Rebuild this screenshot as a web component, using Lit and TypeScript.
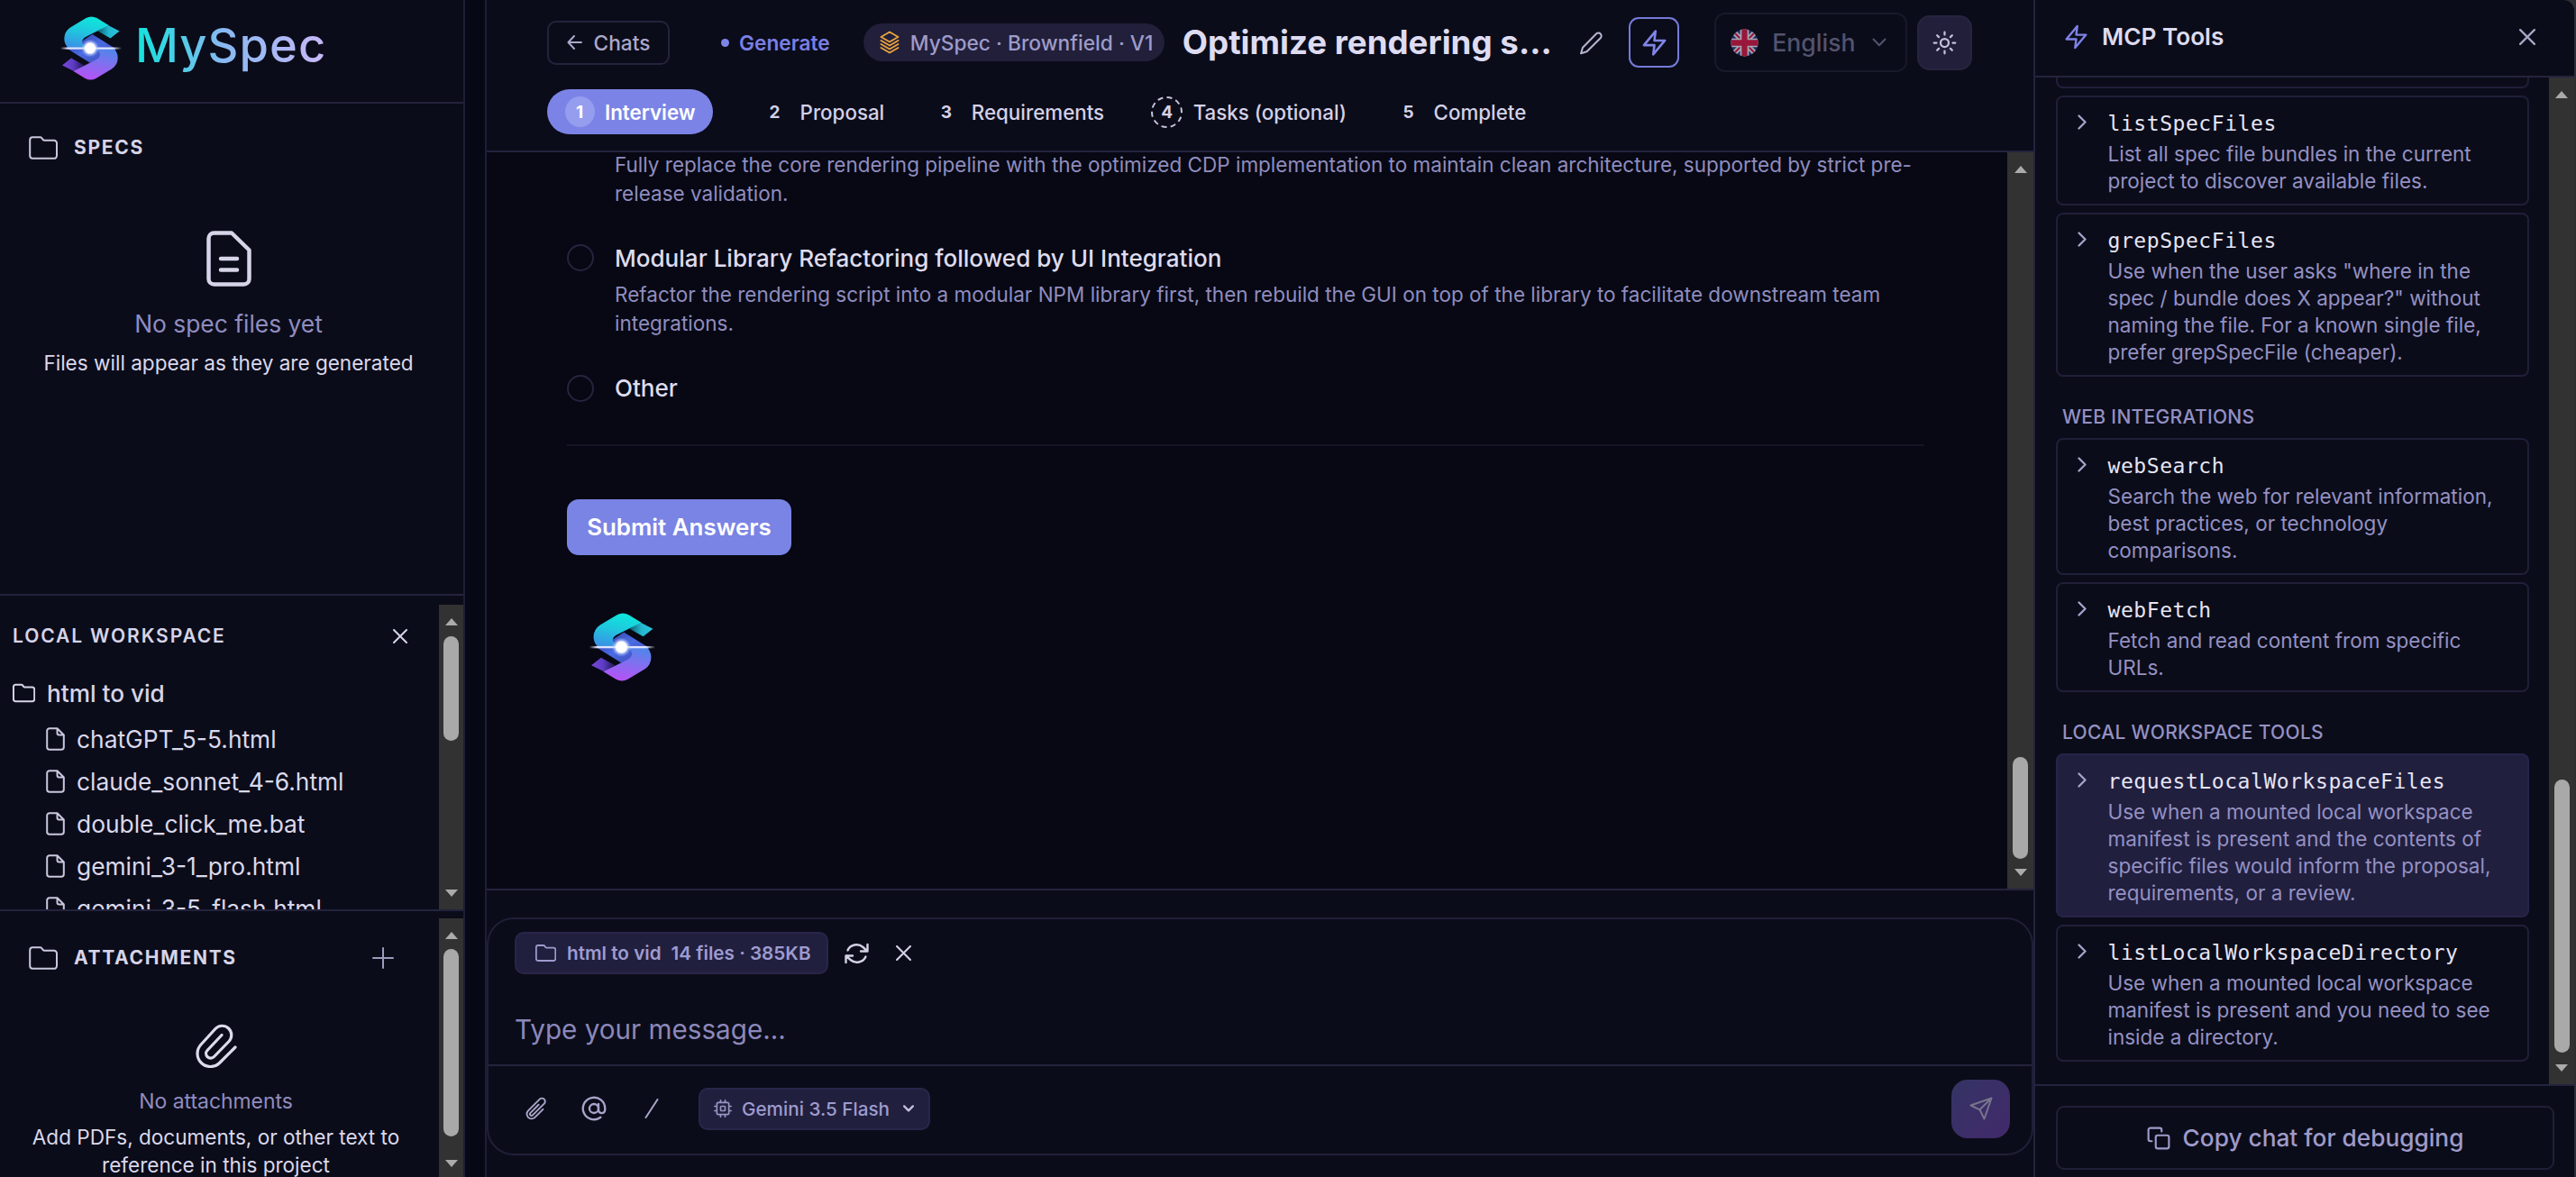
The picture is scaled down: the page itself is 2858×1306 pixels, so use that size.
import { LitElement, html, css } from "lit";
import { customElement } from "lit/decorators.js";

const folder = html`<svg class="ic folder" viewBox="0 0 32 26"><path d="M1.2 4.2a3 3 0 0 1 3-3h8.2q1.3 0 2 1l1.2 1.7q.6.9 1.800.9h10.600a3 3 0 0 1 3 3v14a3 3 0 0 1-3 3H4.200a3 3 0 0 1-3-3z"/></svg>`;
const bolt = html`<svg class="ic bolt" viewBox="0 0 24 24"><path d="M13 2 3 14h9l-1 8 10-12h-9l1-8z"/></svg>`;
const cross = html`<svg class="ic cross" viewBox="0 0 16 16"><path d="M1 1 15 15M15 1 1 15"/></svg>`;
const clip = html`<svg class="ic clip" viewBox="0 0 24 24"><path d="M18.375 12.739l-7.693 7.693a4.500 4.500 0 0 1-6.364-6.364l10.940-10.940A3 3 0 1 1 19.500 7.372L8.552 18.320m.009-.010-.010.010m5.699-9.941-7.810 7.810a1.500 1.500 0 0 0 2.112 2.130"/></svg>`;
const clipBig = html`<svg class="ic clip" viewBox="0 0 46 50"><path d="M44 27 L26.500 44.500 A14.500 14.500 0 0 1 6 24 L22 6.500 A9.800 9.800 0 0 1 37 20.500 L20.500 37.500 A5 5 0 0 1 13 30.500 L29 13.500"/></svg>`;
const chevDown = html`<svg class="ic chev" viewBox="0 0 16 10"><path d="M1.500 1.500 8 8.200 14.500 1.500"/></svg>`;
const file = html`<svg class="ic file" viewBox="0 0 21 26"><path d="M12.500 1.200H4a2.800 2.800 0 0 0-2.800 2.800v18A2.800 2.800 0 0 0 4 24.800h13a2.800 2.800 0 0 0 2.800-2.800V8.500zM12.500 1.200v5.300a2 2 0 0 0 2 2h5.300"/></svg>`;

@customElement("brand-mark")
export class BrandMark extends LitElement {
  static styles = css`
    :host { display: block; }
    svg { display: block; width: 100%; height: 100%; overflow: visible; }
  `;
  render() {
    return html`<svg viewBox="0 0 66 71" preserveAspectRatio="none">
      <defs>
        <linearGradient id="up" x1="0.500" y1="0" x2="0.250" y2="1"><stop offset="0" stop-color="#0ee6dc"/><stop offset=".45" stop-color="#1fc8de"/><stop offset="1" stop-color="#3b8fe6"/></linearGradient>
        <linearGradient id="lo" x1="0.700" y1="0" x2="0.400" y2="1"><stop offset="0" stop-color="#4f86ea"/><stop offset=".45" stop-color="#8070ef"/><stop offset="1" stop-color="#b652f6"/></linearGradient>
        <linearGradient id="mid" x1="0" y1="0" x2="1" y2="1"><stop offset="0" stop-color="#2c3796"/><stop offset=".5" stop-color="#4a6be4"/><stop offset="1" stop-color="#3a45b0"/></linearGradient>
        <linearGradient id="tipA" x1="0" y1="0" x2="1" y2="0"><stop offset="0" stop-color="#0b5f70"/><stop offset=".5" stop-color="#22b7cf"/><stop offset="1" stop-color="#2cc4dc"/></linearGradient>
        <linearGradient id="tipB" x1="1" y1="0" x2="0" y2="0"><stop offset="0" stop-color="#22164f"/><stop offset=".5" stop-color="#5c3cc4"/><stop offset="1" stop-color="#7a48dc"/></linearGradient>
        <radialGradient id="glow"><stop offset="0" stop-color="#fff"/><stop offset=".55" stop-color="#fff"/><stop offset=".7" stop-color="#cfe0ff" stop-opacity=".6"/><stop offset="1" stop-color="#9db8ff" stop-opacity="0"/></radialGradient>
        <linearGradient id="ray"><stop offset="0" stop-color="#fff" stop-opacity="0"/><stop offset=".12" stop-color="#dfe4ff"/><stop offset=".85" stop-color="#dfe4ff"/><stop offset="1" stop-color="#fff" stop-opacity="0"/></linearGradient>
      </defs>
      <path fill="url(#mid)" d="M24 27 34.500 20 60 36 58 50 42 50 31.500 51.500 5 35z"/>
      <path fill="url(#tipA)" d="M50 9 64.500 16.500 54.500 24.500 40.500 16.500z"/>
      <path fill="url(#tipB)" d="M16 62 1 54.500 11 46.500 25.500 54.500z"/>
      <path fill="url(#up)" d="M52.500 10 39.500 2Q33.500-1.200 27.500 2L10 12.500Q3.300 17 3.300 25 3.300 31 8 35.500L30 35.500Q23 32 23 28.500 23 25.500 27 23z"/>
      <path fill="url(#lo)" d="M13.500 61 26.500 69Q32.500 72.200 38.500 69L56 58.500Q62.700 54 62.700 46 62.700 40 58 35.500L36 35.500Q43 39 43 42.500 43 45.500 39 48z"/>
      <rect x="-1" y="34.500" width="68" height="2.200" fill="url(#ray)"/>
      <circle cx="32" cy="35.500" r="10" fill="url(#glow)"/>
    </svg>`;
  }
}

@customElement("scroll-rail")
export class ScrollRail extends LitElement {
  static properties = { before: { type: Number }, size: { type: Number } };
  declare before: number;
  declare size: number;
  static styles = css`
    :host { display: flex; flex-direction: column; align-items: center; background: #323232; box-sizing: border-box; padding: 15px 0 14px; min-height: 0; overflow: hidden; }
    .up, .down { flex: none; width: 0; height: 0; border-left: 7px solid transparent; border-right: 7px solid transparent; }
    .up { border-bottom: 8px solid #ababab; }
    .down { border-top: 8px solid #ababab; }
    .gap { flex: none; }
    .thumb { width: 17px; border-radius: 9px; background: #a9a9a9; flex: none; }
    .rest { flex: 1; min-height: 0; }
  `;
  render() {
    return html`<div class="up"></div>
      <div class="gap" style="height:${this.before}px"></div>
      <div class="thumb" style="height:${this.size}px"></div>
      <div class="rest"></div><div class="down"></div>`;
  }
}

interface Tool { name: string; lines: string; active?: boolean; }

@customElement("tool-card")
export class ToolCard extends LitElement {
  static properties = { tool: { attribute: false } };
  declare tool: Tool;
  static styles = css`
    :host { display: block; font-family: Inter, "Liberation Sans", sans-serif; }
    .card { box-sizing: border-box; border: 2px solid #201f39; border-radius: 8px; padding: 13px 10px 10px 55.500px; background: #0b0c19; }
    .active { background: #211f3e; border-color: #26244a; }
    .head { position: relative; height: 35px; display: flex; align-items: center; }
    .head svg { position: absolute; left: -34px; top: 5.500px; width: 10px; height: 17px; fill: none; stroke: #a6a3cb; stroke-width: 2.300; stroke-linecap: round; stroke-linejoin: round; }
    .name { font-family: "DejaVu Sans Mono", monospace; font-size: 23px; letter-spacing: 0.560px; color: #e6e4f3; line-height: 35px; margin-top: -2px; }
    .desc { font-size: 22.500px; line-height: 30px; color: #9491c3; white-space: pre-line; }
  `;
  render() {
    return html`<div class="card ${this.tool.active ? "active" : ""}">
      <div class="head"><svg viewBox="0 0 10 17"><path d="M1.500 1.500 8.500 8.500 1.500 15.500"/></svg><span class="name">${this.tool.name}</span></div>
      <div class="desc">${this.tool.lines}</div>
    </div>`;
  }
}

const specTools: Tool[] = [
  { name: "listSpecFiles", lines: "List all spec file bundles in the current\nproject to discover available files." },
  { name: "grepSpecFiles", lines: "Use when the user asks \"where in the\nspec / bundle does X appear?\" without\nnaming the file. For a known single file,\nprefer grepSpecFile (cheaper)." },
];
const webTools: Tool[] = [
  { name: "webSearch", lines: "Search the web for relevant information,\nbest practices, or technology\ncomparisons." },
  { name: "webFetch", lines: "Fetch and read content from specific\nURLs." },
];
const localTools: Tool[] = [
  { name: "requestLocalWorkspaceFiles", active: true, lines: "Use when a mounted local workspace\nmanifest is present and the contents of\nspecific files would inform the proposal,\nrequirements, or a review." },
  { name: "listLocalWorkspaceDirectory", lines: "Use when a mounted local workspace\nmanifest is present and you need to see\ninside a directory." },
];
const files = ["chatGPT_5-5.html", "claude_sonnet_4-6.html", "double_click_me.bat", "gemini_3-1_pro.html", "gemini_3-5_flash.html"];
const steps = ["Interview", "Proposal", "Requirements", "Tasks (optional)", "Complete"];

@customElement("app-root")
export class AppRoot extends LitElement {
  static styles = css`
    :host { display: block; width: 2858px; height: 1306px; overflow: hidden; background: #070815; font-family: Inter, "Liberation Sans", sans-serif; color: #d6d4e8; }
    * { box-sizing: border-box; }
    .ic { display: block; flex: none; fill: none; stroke: currentColor; stroke-width: 2; stroke-linecap: round; stroke-linejoin: round; }
    .app { display: grid; grid-template-columns: 516px 22px 1720px 600px; height: 1306px; }
    span { white-space: pre; }

    /* left sidebar */
    .side { background: #0b0c19; border-right: 2px solid #1f1e37; display: grid; grid-template-rows: 115px 546px 350px 295px; min-height: 0; }
    .brand { border-bottom: 2px solid #24233e; display: flex; padding: 18px 0 0 68px; }
    .brand brand-mark { width: 66px; height: 71px; }
    .word { margin-left: 16px; margin-top: -9px; height: 80px; line-height: 82px; font-size: 52.500px; font-weight: 500; letter-spacing: 1.060px; background: linear-gradient(90deg, #12e3dc 0%, #86b9f2 45%, #c9b8f7 100%); -webkit-background-clip: text; background-clip: text; color: transparent; }
    .specs { border-bottom: 2px solid #24233e; padding: 36px 7px 0 32px; }
    .caps { font-size: 21px; font-weight: 700; letter-spacing: 1.700px; color: #d6d4e8; line-height: 26px; }
    .row { display: flex; align-items: center; }
    .folder { width: 32px; height: 26px; }
    .specs .row, .att .row { gap: 18px; color: #c9c7de; }
    .blank { display: flex; flex-direction: column; align-items: center; }
    .specs .blank { margin-left: -32px; padding-top: 79px; }
    .doc { width: 50px; height: 62px; color: #d6d4e8; stroke-width: 4.500; }
    .muted { color: #908dc0; }
    .specs .muted { font-size: 26.400px; line-height: 32px; margin-top: 25px; }
    .note { font-size: 22.550px; line-height: 31px; color: #dad8ec; text-align: center; }
    .specs .note { margin-top: 12px; }
    .local { border-bottom: 2px solid #24233e; display: grid; grid-template-columns: 487px 27px; padding-top: 10px; min-height: 0; overflow: hidden; }
    .files { padding: 21px 0 0 14px; min-height: 0; height: 338px; overflow: hidden; }
    .files .head { display: flex; justify-content: space-between; align-items: center; height: 28px; padding-right: 35px; }
    .files .cross { width: 16px; height: 16px; }
    .files .caps { font-weight: 600; letter-spacing: 1.880px; }
    .files .root { margin-top: 35px; height: 28px; gap: 13px; font-size: 26.200px; font-weight: 500; }
    .files .folder { width: 25px; height: 22px; stroke-width: 2.600; }
    .tree { padding: 14px 0 0 37px; }
    .tree .row { height: 46.800px; gap: 13px; font-size: 26.350px; color: #dad8ec; }
    .file { width: 21px; height: 26px; color: #c9c7de; }
    .att { display: grid; grid-template-columns: 487px 27px; padding-top: 8px; min-height: 0; }
    .att .body { padding: 31px 8px 0 0; }
    .att .row { padding: 0 42px 0 32px; }
    .att .plus { width: 24px; height: 24px; margin-left: auto; color: #9d9bbd; }
    .att .blank { padding-top: 59px; }
    .att .clip { width: 46px; height: 50px; stroke-width: 3.200; color: #dddbee; }
    .att .muted { font-size: 22.900px; line-height: 30px; margin-top: 22px; }
    .att .note { margin-top: 9px; white-space: pre-line; line-height: 31.300px; }

    /* centre column */
    .main { display: grid; grid-template-rows: 169px 817px 320px; border-left: 2px solid #1f1e37; border-right: 2px solid #24233e; min-width: 0; }
    .top { background: #0b0c19; border-bottom: 2px solid #24233e; padding-left: 67px; }
    .bar { display: flex; align-items: center; height: 94px; }
    .chats { width: 136px; height: 49px; border: 2px solid #24233e; border-radius: 10px; display: flex; align-items: center; justify-content: center; gap: 13px; font-size: 22.700px; font-weight: 500; color: #aaa8ca; }
    .chats svg { width: 17px; height: 16px; }
    .dot { width: 9px; height: 9px; border-radius: 50%; background: #7e85e8; margin-left: 57px; }
    .gen { margin-left: 11px; font-size: 22.700px; font-weight: 600; color: #7a7fe6; }
    .badge { margin-left: 37px; width: 334px; height: 42px; border-radius: 21px; background: #211f3a; display: flex; align-items: center; padding-left: 16px; gap: 10px; font-size: 22.750px; font-weight: 500; color: #9e9bc9; }
    .badge svg { width: 26px; height: 26px; color: #e8a13c; }
    h1 { margin: 0 0 0 20px; font-size: 36.700px; line-height: 46px; font-weight: 700; color: #dedcf2; width: 409.500px; white-space: pre; }
    .pencil { margin-left: 31px; width: 28px; height: 28px; color: #b6b4d0; }
    .boltbtn { margin-left: 27px; width: 56px; height: 56px; border: 2px solid #757bd8; border-radius: 11px; display: flex; align-items: center; justify-content: center; color: #8085e8; }
    .boltbtn .bolt { width: 31px; height: 31px; }
    .lang { margin-left: 39px; width: 214px; height: 66px; border: 2px solid #181929; border-radius: 12px; display: flex; align-items: center; padding-left: 16px; font-size: 26.600px; font-weight: 500; color: #53536e; }
    .lang .flag { width: 31px; height: 31px; margin-right: 15px; }
    .lang .chev { width: 16px; height: 10px; margin-left: 19px; }
    .sun { margin-left: 11px; width: 61px; height: 61px; border-radius: 14px; background: #211f3a; border: 2px solid #26243f; display: flex; align-items: center; justify-content: center; color: #c3c1d8; }
    .sun svg { width: 27px; height: 27px; }
    .steps { display: flex; align-items: center; gap: 52px; height: 50px; margin-top: 5px; font-size: 22.350px; font-weight: 500; color: #d3d1e8; }
    .step { display: flex; align-items: center; gap: 11.500px; }
    .num { width: 33px; height: 34px; border-radius: 50%; display: flex; align-items: center; justify-content: center; font-size: 19px; font-weight: 700; }
    .on { background: #7b84e6; color: #fff; height: 50px; border-radius: 25px; padding: 0 19.500px; font-weight: 600; }
    .on .num { background: #959def; }
    .dash { width: 35px; height: 35px; border: 2px dashed #c5c3da; }

    .chat { display: grid; grid-template-columns: 1fr 29px; background: #070814; min-height: 0; overflow: hidden; }
    .thread { padding: 0 92px 0 89px; min-width: 0; }
    .opt { padding-left: 53px; position: relative; }
    .opt .d { font-size: 22.500px; line-height: 31.500px; color: #908dbf; white-space: pre; }
    .opt .t { font-size: 26.050px; line-height: 36px; font-weight: 500; color: #dedcee; white-space: pre; }
    .radio { position: absolute; left: 0; top: 3px; width: 30px; height: 30px; border-radius: 50%; border: 2.500px solid #25243f; }
    .o1 { margin-top: -2px; }
    .o2 { margin-top: 39px; }
    .o2 .radio { top: 2px; }
    .o2 .t { margin-bottom: 6px; }
    .o3 { margin-top: 38.500px; }
    hr { border: 0; height: 2px; background: #141426; margin: 44px 0 59px; }
    .submit { width: 249px; height: 62px; border-radius: 13px; background: #7a84e4; color: #fff; font-size: 25.900px; font-weight: 600; display: flex; align-items: center; justify-content: center; }
    .avatar { width: 71px; height: 76px; margin: 64px 0 0 26px; }

    .compose { background: #0b0c19; border-top: 2px solid #24233e; padding-top: 30px; }
    .box { height: 264px; border: 2px solid #201f38; border-radius: 30px; display: grid; grid-template-rows: 163px 1fr; }
    .upper { border-bottom: 2px solid #24233e; padding: 14px 0 0 29px; }
    .pill { background: #211f3e; border: 2px solid #28264a; border-radius: 10px; height: 47px; display: flex; align-items: center; color: #9e9bce; }
    .mount { width: 348px; padding-left: 21px; font-size: 20.700px; font-weight: 600; }
    .mount .folder { width: 23px; height: 19px; margin-right: 12px; stroke-width: 2.500; }
    .mount .cnt { margin-left: 11px; }
    .sync { width: 27px; height: 24px; margin-left: 18px; color: #d3d1e6; stroke-width: 2.400; }
    .upper .cross { width: 17px; height: 17px; margin-left: 30px; color: #d3d1e6; }
    .ph { font-size: 29.650px; line-height: 40px; margin-top: 41px; color: #8b88ba; }
    .lower { display: flex; align-items: center; padding: 0 24px 3px 39px; }
    .lower .clip { width: 28px; height: 28px; color: #a8a5ca; stroke-width: 1.700; }
    .at { width: 28px; height: 28px; margin-left: 35.500px; color: #a8a5ca; }
    .slash { width: 16px; height: 22px; margin-left: 42.500px; color: #a8a5ca; }
    .model { width: 257px; margin-left: 44px; padding-left: 15px; font-size: 20.700px; font-weight: 500; }
    .model .chip { width: 20px; height: 20px; margin-right: 11px; color: #9895c2; }
    .model .chev { width: 12px; height: 8px; margin-left: 15px; stroke-width: 3; color: #c3c1dc; }
    .send { margin-left: auto; width: 65px; height: 65px; border-radius: 18px; background: linear-gradient(135deg, #343464 0%, #42296b 100%); display: flex; align-items: center; justify-content: center; color: #77758c; }
    .send svg { width: 26px; height: 26px; }

    /* right panel */
    .edge { background: #2e2e34; padding-right: 2px; }
    .panel { background: #0b0c19; height: 1306px; border-top-right-radius: 12px; display: grid; grid-template-rows: 86px 1117px 103px; overflow: hidden; }
    .phead { border-bottom: 2px solid #24233e; display: flex; align-items: center; padding: 0 43px 3px 31px; color: #a9a7c6; }
    .phead .bolt { width: 29px; height: 30px; color: #7d82e6; }
    .ptitle { margin-left: 14px; font-size: 26.200px; font-weight: 600; color: #dddbef; margin-right: auto; }
    .phead .cross { width: 18px; height: 18px; }
    .pbody { display: grid; grid-template-columns: 1fr 28px; min-height: 0; overflow: hidden; }
    .list { padding: 0 22px 0 23px; display: flex; flex-direction: column; gap: 8px; min-height: 0; overflow: hidden; }
    .stub { height: 12px; flex: none; border: 2px solid #201f39; border-top: 0; border-radius: 0 0 8px 8px; }
    .cat { font-size: 21px; font-weight: 500; letter-spacing: 0.310px; color: #9491c3; padding-left: 7px; height: 52px; display: flex; align-items: center; padding-top: 20px; }
    .pfoot { border-top: 2px solid #24233e; padding: 22px 22px 0 23px; }
    .copy { height: 71px; border: 2px solid #201f38; border-radius: 9px; display: flex; align-items: center; justify-content: center; gap: 14px; font-size: 26.250px; font-weight: 500; color: #9e9bca; }
    .copy svg { width: 26px; height: 26px; }
  `;

  render() {
    return html`<div class="app">
      ${this.sidebar()}
      <div></div>
      ${this.main()}
      ${this.panel()}
    </div>`;
  }

  sidebar() {
    return html`<aside class="side">
      <div class="brand"><brand-mark></brand-mark><span class="word">MySpec</span></div>
      <section class="specs">
        <div class="row">${folder}<span class="caps">SPECS</span></div>
        <div class="blank">
          <svg class="ic doc" viewBox="0 0 50 62"><path d="M28 2.500H8.500a6 6 0 0 0-6 6v45a6 6 0 0 0 6 6h33a6 6 0 0 0 6-6V21.500zM16 31H34M16 43.500H34"/></svg>
          <span class="muted">No spec files yet</span>
          <span class="note">Files will appear as they are generated</span>
        </div>
      </section>
      <section class="local">
        <div class="files">
          <div class="head"><span class="caps">LOCAL WORKSPACE</span>${cross}</div>
          <div class="row root">${folder}<span>html to vid</span></div>
          <div class="tree">${files.map((f) => html`<div class="row">${file}<span>${f}</span></div>`)}</div>
        </div>
        <scroll-rail .before=${11.5} .size=${116}></scroll-rail>
      </section>
      <section class="att">
        <div class="body">
          <div class="row">${folder}<span class="caps">ATTACHMENTS</span>
            <svg class="ic plus" viewBox="0 0 24 24"><path d="M12 1v22M1 12h22"/></svg></div>
          <div class="blank">${clipBig}
            <span class="muted">No attachments</span>
            <div class="note">Add PDFs, documents, or other text to<br>reference in this project</div>
          </div>
        </div>
        <scroll-rail .before=${11} .size=${208}></scroll-rail>
      </section>
    </aside>`;
  }

  main() {
    return html`<main class="main">
      <header class="top">
        <div class="bar">
          <div class="chats"><svg class="ic" viewBox="0 0 17 16"><path d="M8 1 1.500 8 8 15M1.500 8H16"/></svg><span>Chats</span></div>
          <i class="dot"></i><span class="gen">Generate</span>
          <div class="badge"><svg class="ic" viewBox="0 0 26 26"><path d="M13 1.500 3.500 7 13 12.500 22.500 7zM3.500 11 13 16.500 22.500 11M3.500 15 13 20.500 22.500 15M3.500 19 13 24.500 22.500 19"/></svg><span>MySpec · Brownfield · V1</span></div>
          <h1>Optimize rendering s...</h1>
          <svg class="ic pencil" viewBox="0 0 28 28"><path d="M19 4.500a3.300 3.300 0 0 1 4.700 4.700L8.500 24.300 2 26.300 4 19.700z"/></svg>
          <div class="boltbtn">${bolt}</div>
          <div class="lang">
            <svg class="flag" viewBox="0 0 32 32"><defs><clipPath id="fc"><circle cx="16" cy="16" r="15.500"/></clipPath></defs>
              <g clip-path="url(#fc)"><rect width="32" height="32" fill="#1d2f66"/><path d="M0 0 32 32M32 0 0 32" stroke="#a6a6b4" stroke-width="6"/><path d="M0 0 32 32M32 0 0 32" stroke="#98173a" stroke-width="2.200"/><path d="M16 0V32M0 16H32" stroke="#a6a6b4" stroke-width="10"/><path d="M16 0V32M0 16H32" stroke="#98173a" stroke-width="6.500"/></g></svg>
            <span>English</span>${chevDown}
          </div>
          <div class="sun"><svg class="ic" viewBox="0 0 24 24"><circle cx="12" cy="12" r="4"/><path d="M12 1.500v2.500M12 20v2.500M1.500 12h2.500M20 12h2.500M4.600 4.600l1.700 1.700M17.700 17.700l1.700 1.700M4.600 19.400l1.700-1.700M17.700 6.300l1.700-1.700"/></svg></div>
        </div>
        <nav class="steps">${steps.map((s, i) => html`<div class="step ${i === 0 ? "on" : ""}"><div class="num ${i === 3 ? "dash" : ""}">${i + 1}</div><span>${s}</span></div>`)}</nav>
      </header>
      <section class="chat">
        <div class="thread">
          <div class="opt o1"><div class="d">Fully replace the core rendering pipeline with the optimized CDP implementation to maintain clean architecture, supported by strict pre-
release validation.</div></div>
          <div class="opt o2"><i class="radio"></i><div class="t">Modular Library Refactoring followed by UI Integration</div>
            <div class="d">Refactor the rendering script into a modular NPM library first, then rebuild the GUI on top of the library to facilitate downstream team
integrations.</div></div>
          <div class="opt o3"><i class="radio"></i><div class="t">Other</div></div>
          <hr>
          <div class="submit"><span>Submit Answers</span></div>
          <brand-mark class="avatar"></brand-mark>
        </div>
        <scroll-rail .before=${648} .size=${113}></scroll-rail>
      </section>
      <footer class="compose"><div class="box">
        <div class="upper">
          <div class="row">
            <div class="pill mount">${folder}<span>html to vid</span><span class="cnt">14 files · 385KB</span></div>
            <svg class="ic sync" viewBox="0 0 27 24"><path d="M25.500 2v7.500H18M1.500 22v-7.500H9M3.500 8.500A10.500 9.800 0 0 1 20.500 5L25.300 9.300M1.700 14.700 6.500 19A10.500 9.800 0 0 0 23.500 15.500"/></svg>
            ${cross}
          </div>
          <div class="ph">Type your message...</div>
        </div>
        <div class="lower">
          ${clip}
          <svg class="ic at" viewBox="0 0 24 24"><circle cx="12" cy="12" r="4.300"/><path d="M16.300 7.700v5.600a3.100 3.100 0 0 0 6.200 0V12a10.500 10.500 0 1 0-4.200 8.400"/></svg>
          <svg class="ic slash" viewBox="0 0 16 22"><path d="M14.500 1 1.500 21"/></svg>
          <div class="pill model"><svg class="ic chip" viewBox="0 0 24 24"><rect x="4" y="4" width="16" height="16" rx="2"/><rect x="9" y="9" width="6" height="6" rx="1"/><path d="M9 1v3M15 1v3M9 20v3M15 20v3M20 9h3M20 15h3M1 9h3M1 15h3"/></svg><span>Gemini 3.5 Flash</span>${chevDown}</div>
          <div class="send"><svg class="ic" viewBox="0 0 26 26"><path d="M24.500 1.500 1.500 9.500 11.500 14.300 16.500 24.500zM24.500 1.500 11.500 14.300"/></svg></div>
        </div>
      </div></footer>
    </main>`;
  }

  panel() {
    return html`<div class="edge"><aside class="panel">
      <div class="phead">${bolt}<span class="ptitle">MCP Tools</span>${cross}</div>
      <div class="pbody">
        <div class="list">
          <div class="stub"></div>
          ${specTools.map((t) => html`<tool-card .tool=${t}></tool-card>`)}
          <div class="cat"><span>WEB INTEGRATIONS</span></div>
          ${webTools.map((t) => html`<tool-card .tool=${t}></tool-card>`)}
          <div class="cat"><span>LOCAL WORKSPACE TOOLS</span></div>
          ${localTools.map((t) => html`<tool-card .tool=${t}></tool-card>`)}
        </div>
        <scroll-rail .before=${756} .size=${303}></scroll-rail>
      </div>
      <div class="pfoot"><div class="copy"><svg class="ic" viewBox="0 0 24 24"><rect x="9" y="9" width="13.500" height="13.500" rx="2"/><path d="M5 15H3.500a2 2 0 0 1-2-2V3.500a2 2 0 0 1 2-2H13a2 2 0 0 1 2 2V5"/></svg><span>Copy chat for debugging</span></div></div>
    </aside></div>`;
  }
}
